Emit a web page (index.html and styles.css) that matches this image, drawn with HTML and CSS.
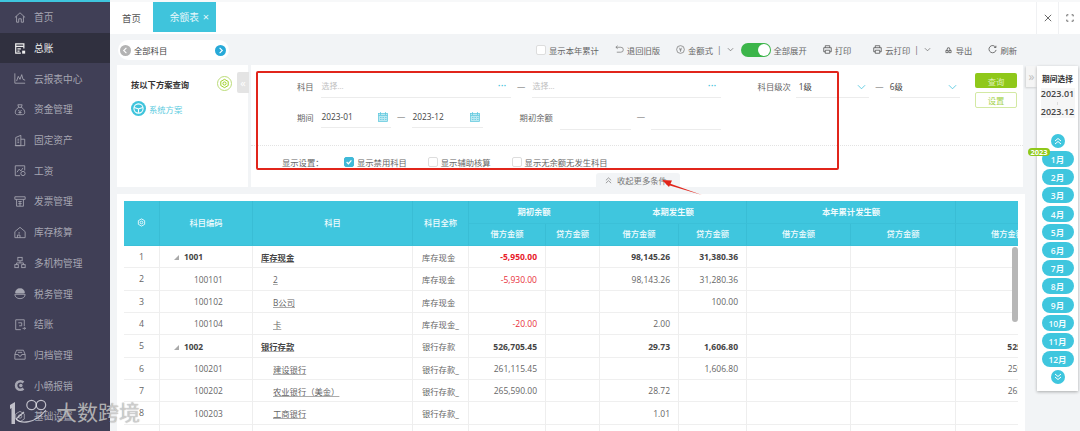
FILE: index.html
```html
<!DOCTYPE html>
<html lang="zh-CN">
<head>
<meta charset="utf-8">
<title>余额表</title>
<link rel="stylesheet" href="styles.css">
</head>
<body>
<div class="app">
  <nav class="sidebar">
    <a class="nav-item"><svg class="nav-icon" viewBox="0 0 14 14"><path d="M1 7 7 1.5 13 7M3 5.5V12.5H5.5V8.5H8.5V12.5H11V5.5"/></svg>首页</a>
    <a class="nav-item active"><svg class="nav-icon" viewBox="0 0 14 14"><path class="thick" d="M11.5 7V1.5H2V12.5H8"/><path class="thick" d="M2 4.5H11.5M4 7.5H8M4 10H6.5"/><rect class="solid" x="9.5" y="9.5" width="3.5" height="3.5"/></svg>总账</a>
    <a class="nav-item"><svg class="nav-icon" viewBox="0 0 14 14"><path d="M1 1V12.5H13M3 10 5 4.5 7 8 9 2.5 10.5 8 13 9"/></svg>云报表中心</a>
    <a class="nav-item"><svg class="nav-icon" viewBox="0 0 14 14"><path d="M4.5 1.5H9.5L8.5 4.5H5.5ZM5.5 4.5C2.5 6 1.5 8.5 1.5 10.5 1.5 12 2.5 13 4 13H10C11.5 13 12.5 12 12.5 10.5 12.5 8.500 11.500 6 8.500 4.500M5 7.500 7 9.500 9 7.500M7 9.500V12M5.200 10.500H8.800"/></svg>资金管理</a>
    <a class="nav-item"><svg class="nav-icon" viewBox="0 0 14 14"><path d="M2 13V3.500L8 1V13ZM8 5.500H12.500V13H1M4 5.500H6M4 7.500H6M4 9.500H6"/></svg>固定资产</a>
    <a class="nav-item"><svg class="nav-icon" viewBox="0 0 14 14"><path d="M7 13H1.500V1.500H12.500V7M3.500 9 6 5.500 8 7.500 10.500 4"/><circle cx="10.500" cy="10.500" r="2.500"/></svg>工资</a>
    <a class="nav-item"><svg class="nav-icon" viewBox="0 0 14 14"><path d="M1 1.500H13M1 4.500H13M1 1.500V4.500M13 1.500V4.500M3 4.500V12.500H11V4.500M5 7H9M5 9.500H9M7 7V12.500"/></svg>发票管理</a>
    <a class="nav-item"><svg class="nav-icon" viewBox="0 0 14 14"><path d="M1 6 7 1 13 6V13H1ZM4 10H7V13M4 10V13M7 7.500H5"/></svg>库存核算</a>
    <a class="nav-item"><svg class="nav-icon" viewBox="0 0 14 14"><rect x="4.500" y="1" width="5" height="4"/><rect x="1" y="9.500" width="4" height="3.500"/><rect x="9" y="9.500" width="4" height="3.500"/><path d="M7 5V7.500M3 9.500V7.500H11V9.500"/></svg>多机构管理</a>
    <a class="nav-item"><svg class="nav-icon" viewBox="0 0 14 14"><path class="fill" d="M2 6.500C1.500 3.500 4 1 7 1.500 10 1 12.500 3.500 12 6.500Z"/><path d="M1 8H13C13 11 10.500 13 7 13 3.500 13 1 11 1 8Z"/></svg>税务管理</a>
    <a class="nav-item"><svg class="nav-icon" viewBox="0 0 14 14"><path d="M8 13H2V1.500H12V9M5 5H9V8.500H6M10 11.500H13.500M12 10 13.500 11.500 12 13"/></svg>结账</a>
    <a class="nav-item"><svg class="nav-icon" viewBox="0 0 14 14"><path d="M3 2H11L13 7V12.500H1V7ZM1 7H5L6 9H8L9 7H13M4.500 4.500H9.500"/></svg>归档管理</a>
    <a class="nav-item"><svg class="nav-icon" viewBox="0 0 14 14"><path class="thick3" d="M11 3.500A5 5 0 1 0 11 10.500"/><circle class="solid" cx="8" cy="7" r="2"/></svg>小畅报销</a>
    <a class="nav-item"><svg class="nav-icon" viewBox="0 0 14 14"><circle cx="7" cy="7" r="2"/><path d="M7 1 12 4V10L7 13 2 10V4Z"/></svg>基础设置</a>
  </nav>

  <div class="main">
    <header class="topbar">
      <a class="tab">首页</a>
      <a class="tab tab-active">余额表<span class="tab-close">×</span></a>
      <div class="top-actions">
        <button class="top-btn"><svg class="top-icon" viewBox="0 0 10 10"><path d="M1 1 9 9M9 1 1 9"/></svg></button>
        <button class="top-btn"><svg class="top-icon" viewBox="0 0 10 10"><path d="M1 3V1H3M7 1H9V3M9 7V9H7M3 9H1V7"/></svg></button>
      </div>
    </header>

    <div class="toolbar">
      <div class="subject-pill">
        <span class="pill-btn pill-grey"><svg viewBox="0 0 10 10"><path d="M6 2 3 5 6 8"/></svg></span>
        <span class="pill-text">全部科目</span>
        <span class="pill-btn pill-blue"><svg viewBox="0 0 10 10"><path d="M4 2 7 5 4 8"/></svg></span>
      </div>
      <div class="tools">
        <span class="tool"><i class="check"></i>显示本年累计</span>
        <span class="tool"><svg class="tool-icon" viewBox="0 0 10 10"><path d="M1 2.500H6.500A2.700 2.700 0 0 1 6.500 8H2M3 .8 1 2.500 3 4.200"/></svg>退回旧版</span>
        <span class="tool"><svg class="tool-icon" viewBox="0 0 10 10"><circle cx="5" cy="5" r="4.300"/><path d="M3.500 3 5 4.800 6.500 3M5 4.800V7.500M3.700 5.300H6.300"/></svg>金额式<span class="sep">|</span><svg class="chev-small" viewBox="0 0 8 5"><path d="M1 1 4 4 7 1"/></svg></span>
        <span class="tool tool-tight"><i class="toggle"><b></b></i>全部展开</span>
        <span class="tool"><svg class="tool-icon" viewBox="0 0 10 10"><path class="dark" d="M2.500 3V.8H7.500V3M2.500 7.500H.8V3H9.200V7.500H7.500M2.500 5.800H7.500V9.200H2.500Z"/></svg>打印</span>
        <span class="tool tool-wide"><svg class="tool-icon" viewBox="0 0 10 10"><path class="dark" d="M2.500 3V.8H7.500V3M2.500 7.500H.8V3H9.200V7.500H7.500M2.500 5.800H7.500V9.200H2.500Z"/></svg>云打印<span class="sep">|</span><svg class="chev-small" viewBox="0 0 8 5"><path d="M1 1 4 4 7 1"/></svg></span>
        <span class="tool"><svg class="tool-icon tool-icon-sm" viewBox="0 0 8 8"><path class="dark" d="M1 7H3.500V4.500H1ZM4.500 7H7V4.500H4.500ZM2 4.500 3 1.500H5L6 4.500"/></svg>导出</span>
        <span class="tool"><svg class="tool-icon" viewBox="0 0 10 10"><path class="dark" d="M8.500 2.500A4 4 0 1 0 9 5.500M8.800 .8V2.800H6.800"/></svg>刷新</span>
      </div>
    </div>

    <div class="content">
      <div class="work">
        <div class="query-row">
          <section class="scheme">
            <div class="scheme-head">
              <span class="scheme-title">按以下方案查询</span>
              <span class="scheme-gear"><svg viewBox="0 0 14 14"><path d="M7 2.500 11 4.800V9.200L7 11.500 3 9.200V4.800Z"/><circle cx="7" cy="7" r="1.700"/></svg></span>
            </div>
            <div class="scheme-item">
              <span class="scheme-icon"><svg viewBox="0 0 14 14"><circle cx="7" cy="7" r="4.300"/><path d="M3 6 7 7.500 11 6M7 7.500V11"/></svg></span>系统方案
            </div>
          </section>
          <span class="scheme-toggle">«</span>
          <section class="query">
            <div class="query-main">
              <div class="form">
                <div class="form-row">
                  <label class="form-label">科目</label>
                  <div class="field w190 placeholder">选择...<span class="dots">···</span></div>
                  <span class="dash">—</span>
                  <div class="field w189 placeholder">选择...<span class="dots">···</span></div>
                  <label class="form-label label-far">科目级次</label>
                  <div class="field w73 tight">1级<svg class="chev" viewBox="0 0 10 6"><path d="M1 1 5 5 9 1"/></svg></div>
                  <span class="dash">—</span>
                  <div class="field w70 flush">6级<svg class="chev" viewBox="0 0 10 6"><path d="M1 1 5 5 9 1"/></svg></div>
                </div>
                <div class="form-row row-two">
                  <label class="form-label">期间</label>
                  <div class="field w70">2023-01<svg class="cal" viewBox="0 0 10 10"><rect class="cal-bg" x=".5" y="1.500" width="9" height="8"/><path d="M2.500 0V3M7.500 0V3M.5 3.500H9.500M2 5.500H3.500M4.500 5.500H6M7 5.500H8.500M2 7.500H3.500M4.500 7.500H6M7 7.500H8.500"/></svg></div>
                  <span class="dash">—</span>
                  <div class="field w71">2023-12<svg class="cal" viewBox="0 0 10 10"><rect class="cal-bg" x=".5" y="1.500" width="9" height="8"/><path d="M2.500 0V3M7.500 0V3M.5 3.500H9.500M2 5.500H3.500M4.500 5.500H6M7 5.500H8.500M2 7.500H3.500M4.500 7.500H6M7 7.500H8.500"/></svg></div>
                  <label class="form-label label-far">期初余额</label>
                  <div class="field w71 low"></div>
                  <span class="dash dash-20">—</span>
                  <div class="field w70 low"></div>
                </div>
              </div>
              <div class="query-btns">
                <button class="btn btn-primary">查询</button>
                <button class="btn btn-ghost">设置</button>
              </div>
            </div>
            <div class="display-row">
              <span class="display-label">显示设置：</span>
              <span class="opt"><i class="check checked"><svg viewBox="0 0 10 10"><path d="M2 5 4.300 7.200 8 3"/></svg></i>显示禁用科目</span>
              <span class="opt"><i class="check"></i>显示辅助核算</span>
              <span class="opt"><i class="check"></i>显示无余额无发生科目</span>
            </div>
            <div class="collapse-btn"><svg viewBox="0 0 8 8"><path d="M1 3.800 4 1 7 3.800M1 7 4 4.200 7 7"/></svg>收起更多条件</div>
            <div class="red-box"></div>
            <svg class="red-arrow" viewBox="0 0 44 20"><path class="arrow-tail" d="M41 17 6 4.500 5.500 6.500Z"/><path class="arrow-head" d="M1 2 11 2.500 8 9Z"/></svg>
          </section>
        </div>

        <section class="table-card">
          <div class="table-wrap">
            <table class="grid">
              <colgroup>
                <col class="c36"><col class="c93"><col class="c160"><col class="c56"><col class="c77"><col class="c54"><col class="c79"><col class="c68"><col class="c104"><col class="c105"><col class="c104">
              </colgroup>
              <thead>
                <tr>
                  <th rowspan="2"><svg class="th-gear" viewBox="0 0 10 10"><path d="M5 1 8.500 3V7L5 9 1.500 7V3Z"/><circle cx="5" cy="5" r="1.500"/></svg></th>
                  <th rowspan="2">科目编码</th>
                  <th rowspan="2">科目</th>
                  <th rowspan="2">科目全称</th>
                  <th colspan="2" class="group">期初余额</th>
                  <th colspan="2" class="group">本期发生额</th>
                  <th colspan="2" class="group">本年累计发生额</th>
                  <th class="group"></th>
                </tr>
                <tr>
                  <th>借方金额</th><th>贷方金额</th><th>借方金额</th><th>贷方金额</th><th>借方金额</th><th>贷方金额</th><th>借方金额</th>
                </tr>
              </thead>
              <tbody>
                <tr class="parent"><td class="seq">1</td><td class="code"><i class="tri"></i>1001</td><td class="name"><span>库存现金</span></td><td class="full">库存现金</td><td class="num neg">-5,950.00</td><td></td><td class="num">98,145.26</td><td class="num">31,380.36</td><td></td><td></td><td class="num">60,814.90</td></tr>
                <tr><td class="seq">2</td><td class="code">100101</td><td class="name"><span>2</span></td><td class="full">库存现金</td><td class="num neg">-5,930.00</td><td></td><td class="num">98,143.26</td><td class="num">31,280.36</td><td></td><td></td><td class="num">60,932.90</td></tr>
                <tr><td class="seq">3</td><td class="code">100102</td><td class="name"><span>B公司</span></td><td class="full">库存现金</td><td></td><td></td><td></td><td class="num">100.00</td><td></td><td></td><td class="num">-100.00</td></tr>
                <tr><td class="seq">4</td><td class="code">100104</td><td class="name"><span>卡</span></td><td class="full">库存现金_</td><td class="num neg">-20.00</td><td></td><td class="num">2.00</td><td></td><td></td><td></td><td class="num">-18.00</td></tr>
                <tr class="parent"><td class="seq">5</td><td class="code"><i class="tri"></i>1002</td><td class="name"><span>银行存款</span></td><td class="full">银行存款</td><td class="num">526,705.45</td><td></td><td class="num">29.73</td><td class="num">1,606.80</td><td></td><td></td><td class="num">525,128.38</td></tr>
                <tr><td class="seq">6</td><td class="code">100201</td><td class="name"><span>建设银行</span></td><td class="full">银行存款_</td><td class="num">261,115.45</td><td></td><td></td><td class="num">1,606.80</td><td></td><td></td><td class="num">259,508.65</td></tr>
                <tr><td class="seq">7</td><td class="code">100202</td><td class="name"><span>农业银行（美金）</span></td><td class="full">银行存款_</td><td class="num">265,590.00</td><td></td><td class="num">28.72</td><td></td><td></td><td></td><td class="num">265,618.72</td></tr>
                <tr><td class="seq">8</td><td class="code">100203</td><td class="name"><span>工商银行</span></td><td class="full">银行存款_</td><td></td><td></td><td class="num">1.01</td><td></td><td></td><td></td><td class="num">1.01</td></tr>
                <tr><td class="seq"></td><td></td><td></td><td></td><td></td><td></td><td></td><td></td><td></td><td></td><td></td></tr>
              </tbody>
            </table>
            <div class="scrollbar"></div>
          </div>
        </section>
      </div>

      <aside class="period">
        <span class="period-toggle">»</span>
        <div class="period-panel">
          <div class="period-title">期间选择</div>
          <div class="period-range"><span>2023.01</span><i></i><span>2023.12</span></div>
          <span class="round-btn round-up"><svg viewBox="0 0 10 10"><path d="M2 5 5 2.500 8 5M2 8 5 5.500 8 8"/></svg></span>
          <span class="year-badge">2023</span>
          <div class="months">
            <a class="month">1月</a><a class="month">2月</a><a class="month">3月</a><a class="month">4月</a><a class="month">5月</a><a class="month">6月</a><a class="month">7月</a><a class="month">8月</a><a class="month">9月</a><a class="month">10月</a><a class="month">11月</a><a class="month">12月</a>
          </div>
          <span class="round-btn round-down"><svg viewBox="0 0 10 10"><path d="M2 2 5 4.500 8 2M2 5 5 7.500 8 5"/></svg></span>
        </div>
      </aside>
    </div>
  </div>

  <div class="watermark">
    <svg class="wm-logo" viewBox="0 0 44 26"><path class="wm-solid" d="M1 6 6 3V25H2.500V9L1 10Z"/><path d="M7 20 15 13M7 20C12 25 26 25 37 11"/><circle cx="22.500" cy="6" r="4.700"/><circle cx="32" cy="6" r="4.700"/></svg>
    <span class="wm-text">大数跨境</span>
  </div>
</div>
</body>
</html>
```
FILE: styles.css
```css
* { box-sizing: border-box; }
html, body { margin: 0; height: 100%; overflow: hidden; }
body {
  font-family: "Open Sans", "Noto Sans CJK SC", sans-serif;
  font-size: 8.3px;
  color: #555;
  background: #f2f4f6;
}
svg { display: block; fill: none; stroke: currentColor; }
i { font-style: normal; }
button { font: inherit; padding: 0; border: 0; background: none; }

.app { display: flex; width: 1080px; height: 431px; position: relative; overflow: hidden; }

/* sidebar */
.sidebar {
  flex: 0 0 110px;
  background: #403f56;
  border-top: 2px solid #3fc6de;
  overflow: hidden;
}
.nav-item {
  display: flex;
  align-items: center;
  height: 30.7px;
  padding-left: 14px;
  gap: 8px;
  font-size: 9.7px;
  color: #a6a6b2;
  white-space: nowrap;
}
.nav-item.active { background: #30303f; color: #eeeeee; }
.nav-icon { width: 12px; height: 13px; stroke-width: 1; flex: none; }
.nav-icon .thick { stroke-width: 1.400; }
.nav-icon .thick3 { stroke-width: 3; }
.nav-icon .solid { fill: currentColor; stroke: none; }
.nav-icon .fill { fill: currentColor; }

/* main */
.main { flex: 1; display: flex; flex-direction: column; min-width: 0; }

.topbar {
  flex: 0 0 34px;
  background: #fff;
  border-top: 2px solid #f7f8f9;
  display: flex;
  align-items: stretch;
  padding-left: 12px;
  font-size: 9.4px;
}
.tab { display: flex; align-items: center; color: #555; margin-right: 12px; padding-bottom: 1px; }
.tab-active {
  width: 63px;
  height: 30px;
  background: #3fc4dc;
  color: #e9f8fb;
  padding-left: 17px;
  margin: 0;
  font-size: 9.7px;
}
.tab-close { margin-left: 4px; font-size: 11px; }
.top-actions { display: flex; margin-left: auto; }
.top-btn {
  width: 22px;
  border-left: 1px solid #f0f1f3;
  display: flex;
  align-items: center;
  justify-content: center;
  color: #555;
}
.top-icon { width: 8px; height: 8px; stroke-width: 1.100; }

.toolbar {
  flex: 0 0 31px;
  display: flex;
  align-items: center;
  padding: 0 63px 0 8px;
  font-size: 8.3px;
  color: #666;
}
.subject-pill {
  width: 111px;
  height: 20px;
  background: #fff;
  border-radius: 10px;
  display: flex;
  align-items: center;
  padding: 0 3px 0 2px;
  color: #444;
  font-size: 8.3px;
  margin-top: 1px;
}
.pill-text { margin-left: 3px; flex: 1; }
.pill-btn { width: 11px; height: 11px; border-radius: 50%; color: #fff; display: flex; align-items: center; justify-content: center; }
.pill-btn svg { width: 9px; height: 9px; stroke-width: 1.200; }
.pill-grey { background: #b3b3b3; }
.pill-blue { background: #27a9d8; }
.tools { display: flex; align-items: center; margin-left: auto; gap: 16px; white-space: nowrap; }
.tool { display: flex; align-items: center; gap: 3px; }
.tool-tight { margin-left: -9px; }
.tool-wide { margin-left: 6px; margin-right: -2px; }
.tool-icon { width: 9px; height: 9px; stroke-width: .8; color: #777; }
.tool-icon-sm { width: 7px; height: 8px; margin-right: 1px; }
.tool-icon .dark { stroke: #444; }
.sep { margin: 0 2px 0 1px; }
.chev-small { width: 7px; height: 5px; stroke-width: .8; }
.check {
  display: inline-flex;
  align-items: center;
  justify-content: center;
  width: 10px;
  height: 10px;
  border: 1px solid #ddd;
  border-radius: 2px;
  background: #fff;
}
.checked { background: #3fb9d8; border-color: #3fb9d8; color: #fff; }
.checked svg { width: 8px; height: 8px; stroke-width: 1.500; }
.toggle {
  width: 30px;
  height: 14px;
  border-radius: 7px;
  background: #3cb54a;
  display: flex;
  justify-content: flex-end;
  padding: 1px;
}
.toggle b { width: 12px; height: 12px; border-radius: 50%; background: #fff; }

/* content */
.content { flex: 1; display: flex; min-height: 0; padding-left: 7px; }
.work { width: 908px; display: flex; flex-direction: column; }
.query-row { flex: 0 0 122px; display: flex; gap: 3px; position: relative; }

.scheme { width: 131px; background: #fff; padding: 11px 14px 0; }
.scheme-head { display: flex; align-items: center; justify-content: space-between; height: 15px; padding-right: 2px; }
.scheme-title { font-weight: 700; color: #333; font-size: 8.3px; }
.scheme-gear {
  width: 15px;
  height: 15px;
  border: 1px solid #bcdc7a;
  border-radius: 50%;
  color: #8cc800;
}
.scheme-gear svg { width: 13px; height: 13px; stroke-width: .9; }
.scheme-item { display: flex; align-items: center; gap: 3px; margin-top: 10px; color: #5ccbe0; }
.scheme-icon { width: 15px; height: 15px; border-radius: 50%; background: #3fc4dc; color: #fff; }
.scheme-icon svg { width: 15px; height: 15px; stroke-width: 1; }
.scheme-toggle {
  position: absolute;
  left: 120px;
  top: 7px;
  width: 12px;
  height: 21px;
  background: #e4e4e4;
  color: #fff;
  display: flex;
  align-items: center;
  justify-content: center;
  font-size: 11px;
  border-radius: 2px 0 0 2px;
}

.query { flex: 0 0 772px; background: #fff; position: relative; }
.query-main { display: flex; height: 80px; padding-top: 8px; }
.form { width: 724px; padding-top: 3px; }
.form-row { display: flex; align-items: flex-start; padding-left: 46px; }
.row-two { margin-top: 8px; }
.form-label { width: auto; height: 22px; line-height: 22px; margin-right: 7px; color: #666; white-space: nowrap; }
.label-far { margin-left: 37px; }
.row-two .form-label { line-height: 24px; }
.form-row:first-child .label-far { margin-right: 5px; }
.field {
  height: 22px;
  line-height: 21px;
  border-bottom: 1px solid #ececec;
  padding-left: 1px;
  color: #444;
  display: flex;
  align-items: center;
  justify-content: space-between;
  padding-right: 2px;
}
.placeholder { color: #c0c0c0; font-size: 7.9px; }
.tight { padding-left: 3px; }
.flush { padding-left: 0; }
.low { height: 24px; }
.w190 { width: 190px; }
.w189 { width: 189px; }
.w73 { width: 73px; }
.w71 { width: 71px; }
.w70 { width: 70px; }
.dash { width: 21px; text-align: center; line-height: 22px; color: #888; }
.dash-20 { width: 20px; }
.dots { color: #45c3dd; padding-right: 2px; letter-spacing: .6px; font-weight: 700; }
.chev { width: 9px; height: 6px; color: #45c3dd; stroke-width: .9; margin-right: 1px; }
.cal { width: 10px; height: 10px; color: #57c5dc; stroke-width: .7; margin-right: 1px; }
.cal-bg { fill: #bce9f2; }

.query-btns { width: 42px; display: flex; flex-direction: column; gap: 4px; }
.btn { height: 15px; border-radius: 2px; font-size: 8.3px; }
.btn-primary { background: #8fc81a; color: #dff2b8; }
.btn-ghost { height: 16px; border: 1px solid #d3e9a3; color: #a5d24c; background: #fff; }

.display-row {
  height: 32px;
  border-top: 1px dotted #e3e3e3;
  display: flex;
  align-items: center;
  padding-left: 31px;
  color: #666;
  white-space: nowrap;
}
.display-label { width: 62px; }
.opt { display: flex; align-items: center; gap: 3px; margin-right: 21px; }

.collapse-btn {
  position: absolute;
  left: 345px;
  top: 108px;
  width: 84px;
  height: 14px;
  background: #f2f4f6;
  border-radius: 3px 3px 0 0;
  display: flex;
  align-items: center;
  gap: 5px;
  padding-left: 9px;
  color: #777;
}
.collapse-btn svg { width: 7px; height: 7px; stroke-width: .8; }
.red-box {
  position: absolute;
  left: 5px;
  top: 6px;
  width: 583px;
  height: 99px;
  border: 2px solid #e1251b;
  border-radius: 2px;
  pointer-events: none;
}
.red-arrow { position: absolute; left: 410px; top: 113px; width: 44px; height: 20px; stroke: none; z-index: 2; overflow: visible; }
.arrow-tail, .arrow-head { fill: #e1251b; }

/* table */
.table-card { flex: 1; margin-top: 7px; background: #fff; padding: 7px 7px 0; min-height: 0; overflow: hidden; }
.table-wrap { width: 894px; height: 100%; overflow: hidden; position: relative; }
.grid { width: 936px; table-layout: fixed; border-collapse: separate; border-spacing: 0; }
.c36 { width: 36px; } .c93 { width: 93px; } .c160 { width: 160px; } .c56 { width: 56px; }
.c77 { width: 77px; } .c54 { width: 54px; } .c79 { width: 79px; } .c68 { width: 68px; }
.c104 { width: 104px; } .c105 { width: 105px; }
.grid th {
  background: #3fc6de;
  color: #f0fbfd;
  font-weight: 500;
  font-size: 8.3px;
  height: 22.500px;
  padding: 0 0 2px;
  border-right: 1px solid rgba(0, 100, 120, .08);
  border-bottom: 1px solid rgba(0, 100, 120, .06);
  font-family: "Noto Sans CJK SC", sans-serif;
}
.grid th.group { font-weight: 700; }
.th-gear { width: 9px; height: 9px; margin: auto; stroke-width: 1; }
.grid td {
  height: 22px;
  padding: 0;
  border-right: 1px solid #eeeeee;
  border-bottom: 1px solid #efefef;
  color: #666;
  font-size: 8.800px;
  white-space: nowrap;
  overflow: hidden;
}
.grid tbody tr:nth-child(3n+2) td { height: 23px; }
.grid td.seq { text-align: center; }
.grid td.code { padding-left: 34px; font-size: 8.400px; }
.grid td.name { padding-left: 20px; font-size: 8.300px; }
.grid td.name span { text-decoration: underline; text-decoration-color: #aaa; text-underline-offset: 1px; }
.grid td.full { padding-left: 9px; font-size: 8.300px; }
.grid td.num { text-align: right; padding-right: 8px; font-size: 8.500px; }
.grid td.neg { color: #e8303a; }
.parent td.code { padding-left: 14px; }
.grid .parent td.name { padding-left: 8px; }
.parent td.code, .parent td.name, .parent td.num { font-weight: 700; color: #444; }
.parent td.neg { color: #e8202a; }
.tri {
  display: inline-block;
  width: 0;
  height: 0;
  border-left: 5px solid transparent;
  border-bottom: 5px solid #aaa;
  margin-right: 5px;
}
.scrollbar {
  position: absolute;
  right: 0;
  top: 46px;
  width: 6px;
  height: 75px;
  background: #b7b7b7;
  border-radius: 3px;
}

/* period */
.period { position: relative; flex: 0 0 53px; margin-left: 1px; display: flex; align-items: flex-start; padding-top: 1px; }
.period-toggle {
  width: 11px;
  height: 21px;
  background: #f5f5f5;
  color: #bdbdbd;
  display: flex;
  align-items: center;
  justify-content: center;
  font-size: 12px;
  box-shadow: -1px 1px 2px rgba(0, 0, 0, .15);
}
.period-panel {
  width: 41px;
  height: 325px;
  background: #fff;
  box-shadow: 0 1px 3px rgba(0, 0, 0, .3);
  display: flex;
  flex-direction: column;
  align-items: center;
  position: relative;
}
.period-title { font-weight: 700; color: #333; font-size: 7.700px; margin-top: 8px; line-height: 11px; }
.period-range {
  width: 34px;
  height: 30px;
  margin-top: 3px;
  background: #f6f6f6;
  display: flex;
  flex-direction: column;
  align-items: center;
  justify-content: space-between;
  padding: 0;
  font-size: 9px;
  font-weight: 600;
  color: #444;
  line-height: 12px;
  white-space: nowrap;
}
.period-range i { width: 1px; height: 3px; background: #ddd; }
.round-btn {
  width: 14px;
  height: 14px;
  border-radius: 50%;
  background: #3fc6de;
  color: #fff;
  flex: none;
}
.round-btn svg { width: 14px; height: 14px; stroke-width: 1; padding: 2px; }
.round-up { margin-top: 16px; }
.round-down { margin-top: 3px; }
.year-badge {
  position: absolute;
  left: -9px;
  top: 82px;
  width: 22px;
  height: 8px;
  line-height: 8px;
  background: #8fc81a;
  color: #fff;
  font-size: 7.500px;
  font-weight: 700;
  text-align: center;
  border-radius: 4px;
  z-index: 1;
}
.months { display: flex; flex-direction: column; gap: 2.200px; margin-top: 3px; }
.month {
  width: 32px;
  height: 16px;
  border-radius: 8px;
  background: #3fc6de;
  color: #f2fcfe;
  font-size: 8.500px;
  font-weight: 600;
  display: flex;
  align-items: center;
  justify-content: center;
}

/* watermark */
.watermark {
  position: absolute;
  left: 9px;
  top: 399px;
  display: flex;
  align-items: center;
  gap: 3px;
  pointer-events: none;
}
.wm-logo { width: 44px; height: 26px; color: rgba(235, 235, 240, .75); stroke-width: 1.200; }
.wm-solid { fill: currentColor; stroke: none; }
.wm-text {
  font-size: 21px;
  line-height: 26px;
  letter-spacing: 0;
  color: rgba(225, 225, 225, .7);
  text-shadow: 0 0 1px rgba(70, 70, 70, .6);
}
```
